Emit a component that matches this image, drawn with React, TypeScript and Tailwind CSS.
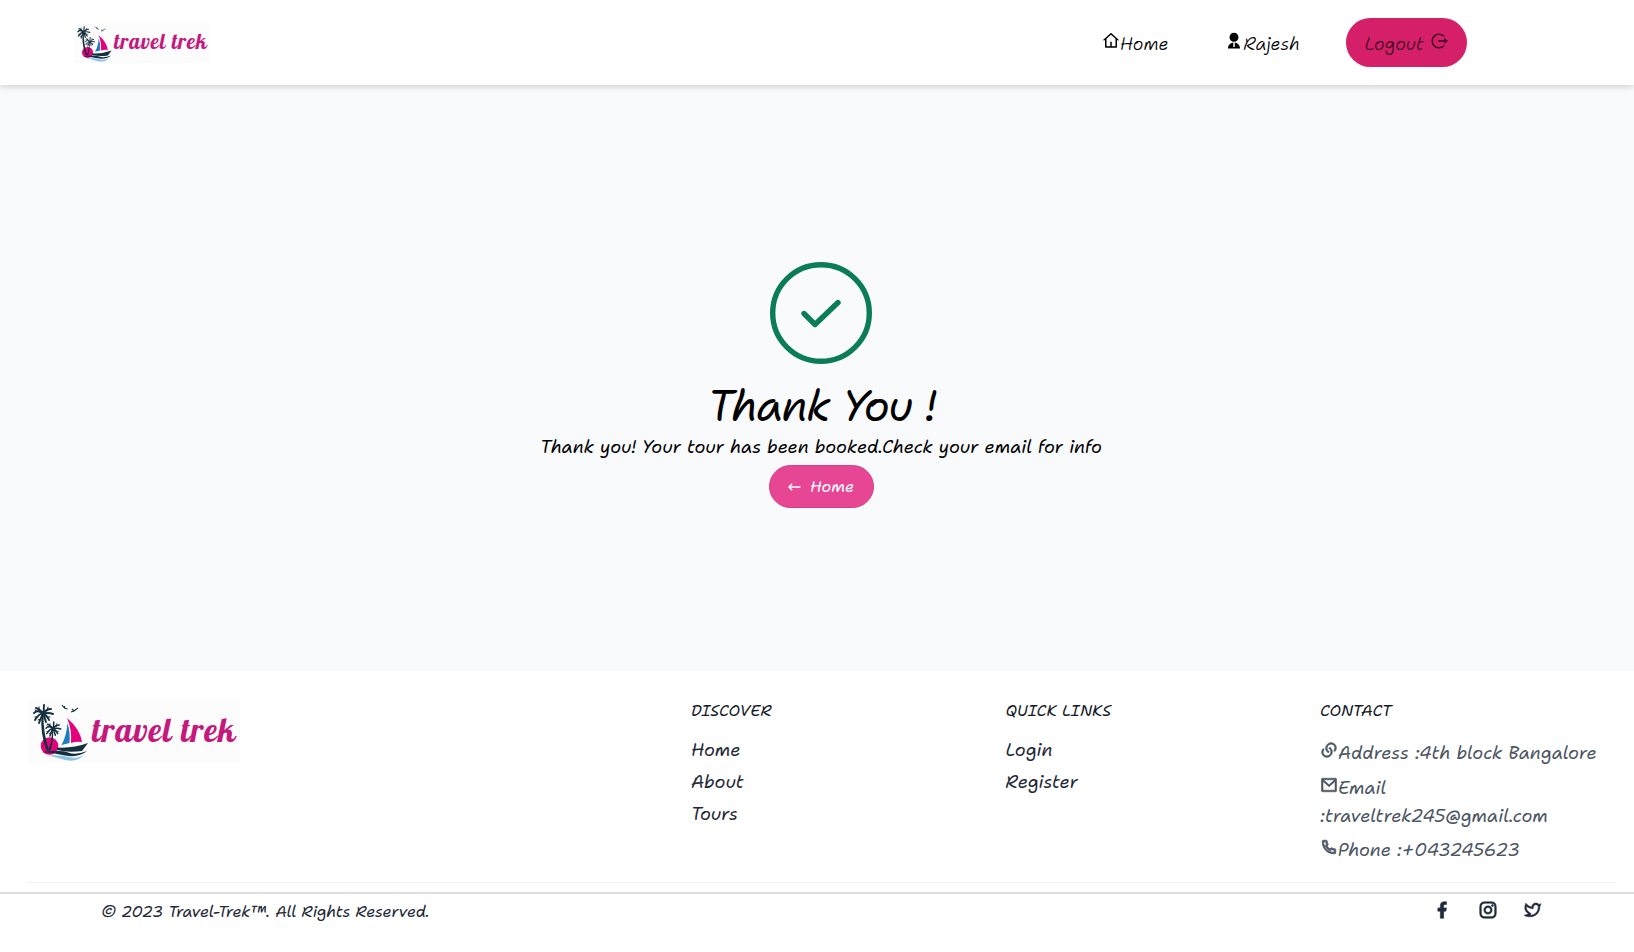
import React from "react";
import {
  RiHome4Line,
  RiUser2Fill,
  RiLogoutCircleRLine,
  RiLinksLine,
  RiMailLine,
  RiPhoneLine,
  RiFacebookFill,
  RiInstagramLine,
  RiTwitterLine,
} from "react-icons/ri";

function Palm() {
  return (
    <g fill="none" stroke="#14303f" strokeLinecap="round" strokeWidth="1.9">
      <path d="M0 0q-5-5-9-1M0 0q-4-1-8 6M0 0q-2 3-4 9M0 0q2 4 3 8M0 0q4 1 6 6M0 0q5-2 10 0M0 0q3-5 8-5M0 0q1-4 1-9M0 0q-3-5-7-6" />
      <path strokeWidth="1" d="M-6-3l-2-1M-5 3l-3 0M3 3l4 0M4-3l1-4M-4-4l0-3M-2 5l-3 1" />
    </g>
  );
}

function Logo({ small }: { small?: boolean }) {
  return (
    <div
      className={
        small
          ? "flex h-[40px] w-[136px] items-center bg-[#fcfcfc]"
          : "flex h-[64px] w-[212px] items-center bg-[#fcfcfc]"
      }
    >
      <svg viewBox="0 0 62 64" className={small ? "h-[40px] w-[39px] shrink-0" : "h-[64px] w-[62px] shrink-0"}>
        <circle cx="21.500" cy="47" r="8.800" fill="#e6007e" />
        <path d="M13.500 15q-1.500 20 5 36.500l2.500 0q-6-18-5.500-36.500z" fill="#14303f" />
        <path d="M25 30q1 11-2.500 21.500l-2.500 0q5-11 3.500-21.500z" fill="#14303f" />
        <g transform="translate(15 15)"><Palm /></g>
        <g transform="translate(25 30) scale(.78)"><Palm /></g>
        <path d="M39 19q13 11 15 24q-6-1-11 1q1-14-4-25z" fill="#e6007e" />
        <path d="M39.500 24q3 10 2 20l-8 2q5-9 6-22z" fill="#1b7fc0" />
        <path d="M29 48.500q16 1 31-4.500l-6 8q-14 2-25-1z" fill="#14303f" />
        <path d="M14 53q18-2.500 26 .5t19-1.500q-8 7-22 4.500q-12-3-23-3.500z" fill="#14303f" />
        <path d="M20 56.500q12-1 21 1.500t16-3q-8 9-20 6q-9-3-17-4.500z" fill="#8fc3e4" />
        <path d="M34 6l2.500 3 3 1M36.500 9l0-2M43 13l3-1 4-3M46 12l-2-2" fill="none" stroke="#14303f" strokeWidth="1.100" />
      </svg>
      <span
        className={
          small
            ? "-mt-[3px] ml-px font-['Lobster','Liberation_Serif',serif] text-[21px] leading-none tracking-[0.9px] whitespace-nowrap text-[#c4187c] not-italic"
            : "-mt-[3px] ml-[2px] font-['Lobster','Liberation_Serif',serif] text-[33px] leading-none tracking-[1.15px] whitespace-nowrap text-[#c4187c] not-italic"
        }
      >
        travel trek
      </span>
    </div>
  );
}

export default function App() {
  return (
    <div className="flex h-[952px] w-full flex-col overflow-hidden bg-white font-['Shantell_Sans','Kalam','Open_Sans',sans-serif] tracking-[-0.07px] italic">
      <header className="relative z-10 flex h-[85px] shrink-0 items-center justify-between bg-white pr-[167px] pl-[74px] shadow-[0_2px_6px_rgba(0,0,0,0.16)]">
        <Logo small />
        <nav className="flex items-center text-[18px] font-light tracking-normal text-black">
          <a className="mr-[56px] flex items-center pt-[4px]">
            <RiHome4Line className="-mt-[8px] size-[18px]" />
            <span>Home</span>
          </a>
          <a className="mr-[46px] flex items-center pt-[4px]">
            <RiUser2Fill className="-mt-[8px] mr-px size-[18px]" />
            <span>Rajesh</span>
          </a>
          <button className="flex h-[49px] w-[121px] items-center justify-center rounded-full bg-[#d61f69] pt-[4px] text-[#3c0a20]">
            <span>Logout</span>
            <RiLogoutCircleRLine className="-mt-[8px] ml-[7px] size-[18px]" />
          </button>
        </nav>
      </header>

      <main className="flex h-[586px] shrink-0 flex-col items-center bg-[#f9fafc] pt-[177px] pl-[8px] text-black">
        <svg viewBox="0 0 102 102" className="size-[102px] shrink-0" fill="none" stroke="#0b7d56">
          <circle cx="51" cy="51" r="48.300" strokeWidth="5.400" />
          <path d="M34 51.500l11 11 23-22" strokeWidth="5.400" strokeLinecap="round" strokeLinejoin="round" />
        </svg>
        <h1 className="mt-[18px] ml-px text-[43px] leading-[48px] font-normal tracking-[-1.400px]">Thank You !</h1>
        <p className="mt-[3px] text-[18px] leading-[28px] font-normal">
          Thank you! Your tour has been booked.Check your email for info
        </p>
        <button className="mt-[4px] flex h-[43px] w-[105px] items-center justify-center rounded-full border border-[#d93d86] bg-[#e74694] text-[16px] text-white">
          <svg viewBox="0 0 14 10" className="mr-[9px] h-[10px] w-[13px]" fill="none" stroke="currentColor" strokeWidth="1.500">
            <path d="M13.500 5H1M4.500 1.500L1 5l3.500 3.500" />
          </svg>
          <span>Home</span>
        </button>
      </main>

      <footer className="flex flex-col">
        <div className="mr-[19px] ml-[27px] flex h-[212px] border-b border-[#eff0f2] pt-[27px]">
          <div className="w-[664px] pt-px pl-px">
            <Logo />
          </div>
          <section className="w-[314.500px] pt-px text-[18px] text-[#1f2937]">
            <h2 className="mb-[11px] text-[16px] leading-[24px] text-[#111827]">DISCOVER</h2>
            <ul className="leading-[32px]">
              <li>Home</li>
              <li>About</li>
              <li>Tours</li>
            </ul>
          </section>
          <section className="w-[314.500px] pt-px text-[18px] text-[#1f2937]">
            <h2 className="mb-[11px] text-[16px] leading-[24px] text-[#111827]">QUICK LINKS</h2>
            <ul className="leading-[32px]">
              <li>Login</li>
              <li>Register</li>
            </ul>
          </section>
          <section className="flex-1 pt-px text-[18px] tracking-[-0.09px] text-[#4b5563]">
            <h2 className="mb-[16px] text-[16px] leading-[24px] text-[#111827]">CONTACT</h2>
            <ul className="flex flex-col gap-[7px] leading-[28px] whitespace-nowrap">
              <li className="flex items-center">
                <RiLinksLine className="-mt-[6px] size-[18px]" stroke="currentColor" strokeWidth={0.8} />
                Address :4th block Bangalore
              </li>
              <li>
                <span className="flex items-center">
                  <RiMailLine className="-mt-[6px] size-[18px]" stroke="currentColor" strokeWidth={0.8} />
                  Email
                </span>
                :traveltrek245@gmail.com
              </li>
              <li className="-mt-px flex items-center">
                <RiPhoneLine className="-mt-[6px] size-[18px]" stroke="currentColor" strokeWidth={1} />
                Phone :+043245623
              </li>
            </ul>
          </section>
        </div>
        <div className="mt-[9px] flex items-start justify-between border-t-2 border-[#dddee0] pt-[6px] pr-[91px] pl-[101px] text-[#1f2937]">
          <p className="text-[16px] leading-[24px] tracking-[-0.21px]">© 2023 Travel-Trek™. All Rights Reserved.</p>
          <div className="flex gap-[25.500px]">
            <RiFacebookFill className="size-[20px]" stroke="currentColor" strokeWidth={0.6} />
            <RiInstagramLine className="size-[20px]" stroke="currentColor" strokeWidth={0.6} />
            <RiTwitterLine className="size-[20px]" stroke="currentColor" strokeWidth={0.6} />
          </div>
        </div>
      </footer>
    </div>
  );
}
